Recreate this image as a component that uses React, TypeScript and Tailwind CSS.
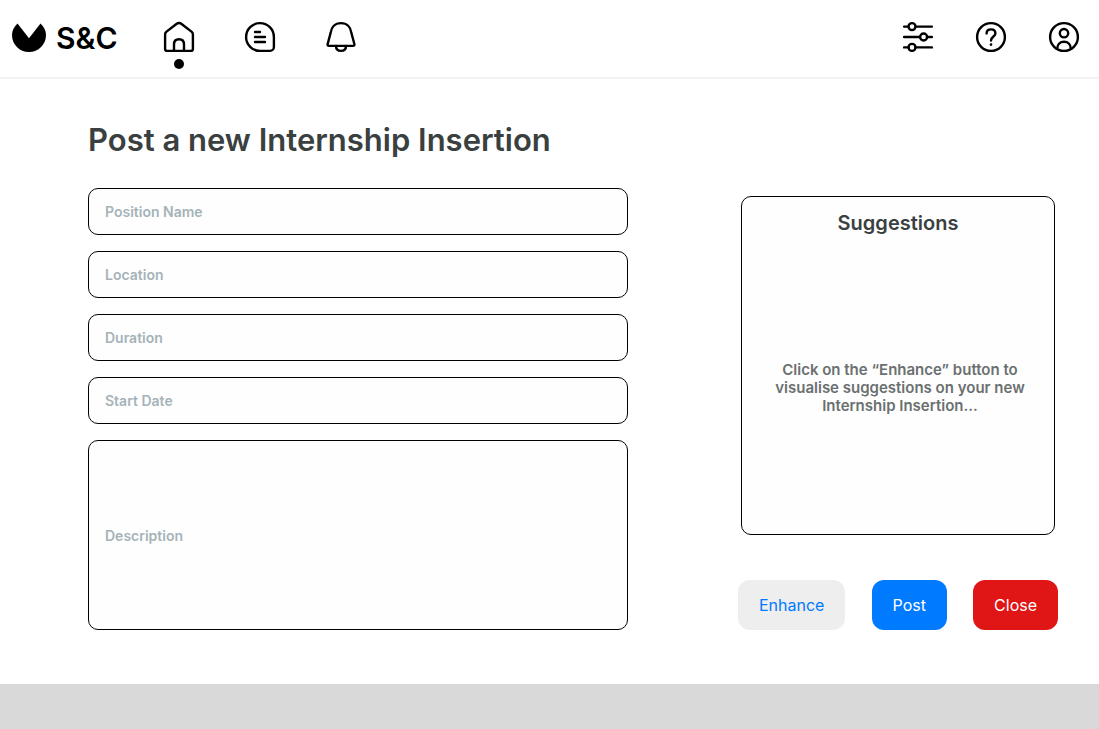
import type { ReactNode } from "react";

const fieldClass =
  "block w-full rounded-[10px] border border-black bg-[#fefefe] px-4 text-[14px] leading-5 font-semibold text-[#3a3f3f] placeholder:text-[#a5b3b9] placeholder:opacity-100";

function Icon({ children }: { children: ReactNode }) {
  return (
    <svg
      className="block size-[30px] overflow-visible"
      viewBox="0 0 30 30"
      fill="none"
      stroke="black"
      strokeWidth="2.4"
      strokeLinecap="round"
      strokeLinejoin="round"
      aria-hidden="true"
    >
      {children}
    </svg>
  );
}

function NavButton({ label, active, children }: { label: string; active?: boolean; children: ReactNode }) {
  return (
    <button type="button" aria-label={label} className="relative block">
      <Icon>{children}</Icon>
      {active && <span className="absolute top-[37px] left-[10px] size-[10px] rounded-full bg-black" />}
    </button>
  );
}

function Field({ id, label }: { id: string; label: string }) {
  return <input id={id} type="text" aria-label={label} placeholder={label} className={`${fieldClass} h-[47px]`} />;
}

export default function App() {
  return (
    <div className="flex min-h-screen flex-col bg-white font-['Inter','Liberation_Sans',sans-serif]">
      <header className="flex h-[79px] items-center justify-between border-b-2 border-[#f3f3f3] pr-5 pb-[3px] pl-3">
        <div className="flex items-center">
          <a href="#" className="flex items-center gap-[10px] text-black">
            <svg className="block h-[30px] w-[34px]" viewBox="0 0 34 30" aria-hidden="true">
              <path d="M5.5 1.5C2.2 4.5 0 8.5 0 13C0 22.5 7.5 30 17 30S34 22.5 34 13C34 8.5 31.8 4.5 28.5 1.5L17 16.3Z" />
            </svg>
            <span className="pt-0.5 text-[30px] leading-9 font-semibold">S&amp;C</span>
          </a>
          <nav className="ml-[46px] flex gap-[51px]">
            <NavButton label="Home" active>
              <path d="M1.1 12.5C1.1 11.4 1.4 10.6 2.2 9.9L12.4 2C14.1 .8 15.9 .8 17.6 2L27.8 9.9C28.6 10.6 28.9 11.4 28.9 12.5V27C28.9 28.2 28.2 28.9 27 28.9H3C1.8 28.9 1.1 28.2 1.1 27Z" />
              <path d="M10 28.9V22.5C10 19.2 12 17.3 15 17.3S20 19.2 20 22.5V28.9" />
            </NavButton>
            <NavButton label="Messages">
              <path d="M15 1.1A13.9 13.9 0 0 0 15 28.9H25A3.9 3.9 0 0 0 28.9 25V15A13.9 13.9 0 0 0 15 1.1Z" />
              <path d="M10 10H15M10 15H20M10 20H20" />
            </NavButton>
            <NavButton label="Notifications">
              <path d="M4.6 11C5.2 5 9.2 1.1 15 1.1S24.8 5 25.4 11L28.3 21.8C28.7 23.2 28.2 23.9 27 23.9H3C1.8 23.9 1.3 23.2 1.7 21.8Z" />
              <path d="M10 24C10 27 12 28.9 15 28.9S20 27 20 24" />
            </NavButton>
          </nav>
        </div>
        <div className="flex gap-[43px]">
          <NavButton label="Settings">
            <path d="M1.1 4.6H5.5M12.6 4.6H28.9M1.1 15H17M24.2 15H28.9M1.1 25.4H5.5M12.6 25.4H28.9" />
            <circle cx="9" cy="4.6" r="3.5" />
            <circle cx="20.6" cy="15" r="3.5" />
            <circle cx="9" cy="25.4" r="3.5" />
          </NavButton>
          <NavButton label="Help">
            <circle cx="15" cy="15" r="13.9" />
            <path d="M10.6 11.4C10.6 9 12.4 7.4 15 7.4S19.4 9 19.4 11.4C19.4 14.4 15 14.8 15 18.6" />
            <circle cx="15" cy="22.6" r="1.3" fill="black" stroke="none" />
          </NavButton>
          <NavButton label="Account">
            <circle cx="15" cy="15" r="13.9" />
            <circle cx="15" cy="11.2" r="4.2" />
            <path d="M8.3 26.5C8.3 22.5 11 19.8 15 19.8S21.7 22.5 21.7 26.5" />
          </NavButton>
        </div>
      </header>

      <main className="flex flex-1 items-end gap-[110px] pt-10 pr-[41px] pb-[54px] pl-[88px]">
        <form id="insertion" className="min-w-0 flex-1">
          <h1 className="mb-7 text-[31px] leading-10 font-semibold text-[#3a3f3f]">
            Post a new Internship Insertion
          </h1>
          <div className="flex flex-col gap-4">
            <Field id="position" label="Position Name" />
            <Field id="location" label="Location" />
            <Field id="duration" label="Duration" />
            <Field id="start-date" label="Start Date" />
            <textarea
              id="description"
              aria-label="Description"
              placeholder="Description"
              className={`${fieldClass} h-[190px] resize-none pt-[85px]`}
            />
          </div>
        </form>

        <aside className="w-80 shrink-0">
          <section className="mx-[3px] flex h-[339px] flex-col rounded-[10px] border border-black bg-[#fefefe] pt-3 text-center">
            <h2 className="text-[20px] leading-7 font-semibold text-[#3a3f3f]">Suggestions</h2>
            <p className="mt-[124px] pr-7 pl-8 text-[15px] leading-[18px] font-semibold text-[#6a7070]">
              Click on the “Enhance” button to visualise suggestions on your new Internship Insertion...
            </p>
          </section>
          <div className="mt-[45px] flex justify-between text-[16px] leading-[22px]">
            <button type="button" className="h-[50px] rounded-xl bg-[#eeeeef] px-[21px] text-[#007aff]">
              Enhance
            </button>
            <button type="submit" form="insertion" className="h-[50px] rounded-xl bg-[#007aff] px-[21px] text-white">
              Post
            </button>
            <button type="button" className="h-[50px] rounded-xl bg-[#e01616] px-[21px] text-white">
              Close
            </button>
          </div>
        </aside>
      </main>

      <footer className="h-[45px] bg-[#d9d9d9]" />
    </div>
  );
}
